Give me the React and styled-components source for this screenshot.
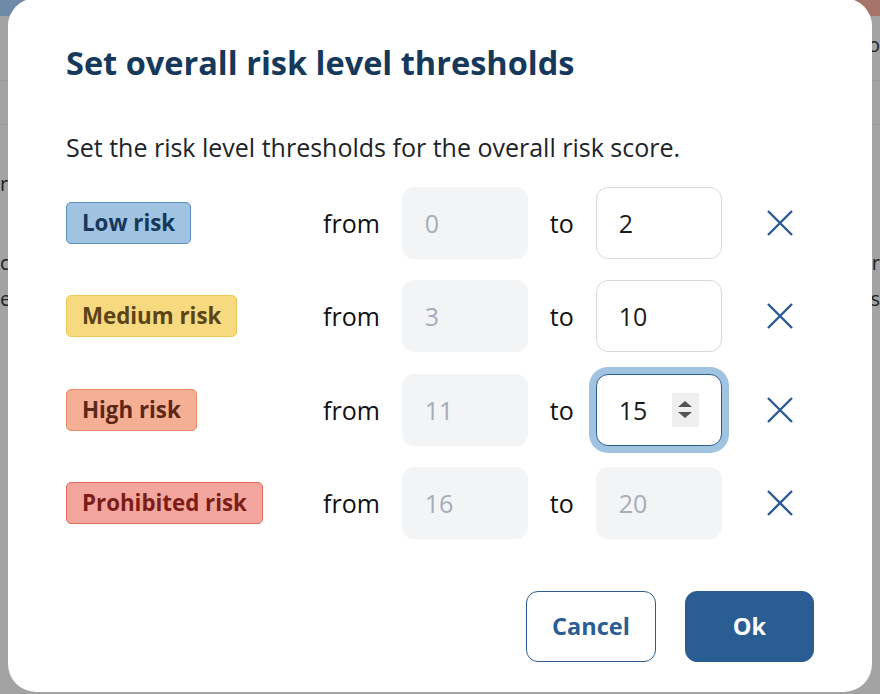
import React from "react";
import styled, { createGlobalStyle } from "styled-components";

const GlobalStyle = createGlobalStyle`
  html, body {
    margin: 0;
    padding: 0;
    overflow: hidden;
  }
  body {
    font-family: "Open Sans", "Noto Sans", sans-serif;
    background: #ffffff;
  }
  * {
    box-sizing: border-box;
  }
`;

// page behind the dialog
const StPage = styled.div`
  width: 880px;
  height: 694px;
  background: #fbfbfb;
  display: flex;
  flex-direction: column;
`;

const StTopBar = styled.div`
  height: 16px;
  display: flex;
  justify-content: space-between;
`;

const StTopBlock = styled.div`
  width: 120px;
  background: ${(props) => props.color};
`;

const StToolbar = styled.div`
  height: 65px;
  border-bottom: 1px solid #ececec;
  display: flex;
  justify-content: space-between;
  align-items: center;
  padding-bottom: 8px;
  font-size: 20px;
  color: #333;
`;

const StSubBar = styled.div`
  height: 44px;
  border-bottom: 1px solid #ececec;
`;

const StPageText = styled.div`
  display: flex;
  justify-content: space-between;
  font-size: 20px;
  color: #333;
  line-height: 36px;
  margin-top: ${(props) => props.top}px;
`;

const StOverlay = styled.div`
  position: fixed;
  inset: 0;
  background: rgba(0, 0, 0, 0.35);
  display: flex;
  flex-direction: column;
  align-items: stretch;
`;

const StModal = styled.div`
  margin: -2px 8px 0;
  background: #ffffff;
  border-radius: 28px;
  padding: 42.5px 58px 30px;
  display: flex;
  flex-direction: column;
`;

const StTitle = styled.h2`
  margin: 0;
  font-size: 32.5px;
  font-weight: 700;
  line-height: 44.3px;
  color: #16395b;
`;

const StDescription = styled.p`
  margin: 45.3px 0 23px;
  font-size: 25px;
  line-height: 34px;
  color: #202328;
`;

const StRows = styled.div`
  display: flex;
  flex-direction: column;
  gap: 21.3px;
`;

const StRow = styled.div`
  display: grid;
  grid-template-columns: 235px auto 126px auto 126px auto;
  justify-content: start;
  column-gap: 22px;
  align-items: center;
  height: 72px;
`;

const StBadgeCell = styled.div`
  display: flex;
`;

const StBadge = styled.span`
  display: inline-block;
  padding: 5px 15px;
  line-height: 30px;
  font-size: 22.3px;
  font-weight: 700;
  border-radius: 5px;
  border: 1px solid ${(props) => props.$border};
  background: ${(props) => props.$bg};
  color: ${(props) => props.$color};
`;

const StLabel = styled.span`
  font-size: 25px;
  color: #111111;
`;

const StInputWrap = styled.div`
  position: relative;
  width: 126px;
  height: 72px;
`;

const StInput = styled.input`
  width: 100%;
  height: 100%;
  border-radius: 12px;
  padding: 0 0 0 22px;
  font-family: "Open Sans", "Noto Sans", sans-serif;
  font-size: 25px;
  outline: none;
  border: 1px solid ${(props) => (props.$locked ? "#f3f4f6" : props.$focused ? "#2a5d92" : "#d6dae0")};
  background: ${(props) => (props.$locked ? "#f3f4f6" : "#ffffff")};
  color: ${(props) => (props.$locked ? "#a4adba" : "#1b1b1b")};
  box-shadow: ${(props) => (props.$focused ? "0 0 0 7px #9fc3e0" : "none")};
`;

const StSpinner = styled.span`
  position: absolute;
  right: 23px;
  top: 19px;
  width: 27px;
  height: 34px;
  background: #efefef;
  display: flex;
  flex-direction: column;
  align-items: center;
  justify-content: center;
  gap: 5px;
`;

const StArrow = styled.span`
  width: 0;
  height: 0;
  border-left: 7px solid transparent;
  border-right: 7px solid transparent;
  ${(props) => (props.$down ? "border-top" : "border-bottom")}: 6px solid #555555;
`;

const StRemove = styled.button`
  margin-left: 23px;
  width: 26px;
  height: 26px;
  padding: 0;
  border: none;
  background: none;
  display: flex;
  cursor: pointer;
`;

const StFooter = styled.div`
  display: flex;
  justify-content: flex-end;
  gap: 29px;
  margin-top: 52px;
`;

const StButton = styled.button`
  width: ${(props) => props.$width}px;
  height: 71px;
  border-radius: 12px;
  font-family: "Open Sans", "Noto Sans", sans-serif;
  font-size: 23.5px;
  font-weight: 700;
  border: 1px solid #2a5d92;
  background: ${(props) => (props.$primary ? "#2a5d92" : "#ffffff")};
  color: ${(props) => (props.$primary ? "#ffffff" : "#2a5d92")};
  cursor: pointer;
`;

const levels = [
  { id: 1, name: "Low risk", from: 0, to: 2, bg: "#9fc3e0", border: "#5b8fc0", color: "#17385a" },
  { id: 2, name: "Medium risk", from: 3, to: 10, bg: "#f7da80", border: "#efc658", color: "#5b4416" },
  { id: 3, name: "High risk", from: 11, to: 15, bg: "#f4af94", border: "#eb8a62", color: "#5c2718", focused: true },
  { id: 4, name: "Prohibited risk", from: 16, to: 20, bg: "#f2a69d", border: "#df6c5e", color: "#7d1d18", last: true },
];

function CloseIcon() {
  return (
    <svg width="26" height="26" viewBox="0 0 26 26" fill="none">
      <path d="M1 1L25 25M25 1L1 25" stroke="#2a5b92" strokeWidth="2.4" />
    </svg>
  );
}

function App() {
  return (
    <>
      <GlobalStyle />
      <StPage>
        <StTopBar>
          <StTopBlock color="#aad5ff" />
          <StTopBlock color="#ffb3a5" />
        </StTopBar>
        <StToolbar>
          <span />
          <span>Do</span>
        </StToolbar>
        <StSubBar />
        <StPageText top={41}>
          <span>risk</span>
          <span />
        </StPageText>
        <StPageText top={43}>
          <span>con</span>
          <span>for</span>
        </StPageText>
        <StPageText top={0}>
          <span>either</span>
          <span>s</span>
        </StPageText>
      </StPage>

      <StOverlay>
        <StModal>
          <StTitle>Set overall risk level thresholds</StTitle>
          <StDescription>
            Set the risk level thresholds for the overall risk score.
          </StDescription>
          <StRows>
            {levels.map((level) => {
              return (
                <StRow key={level.id}>
                  <StBadgeCell>
                    <StBadge $bg={level.bg} $border={level.border} $color={level.color}>
                      {level.name}
                    </StBadge>
                  </StBadgeCell>
                  <StLabel>from</StLabel>
                  <StInputWrap>
                    <StInput $locked readOnly value={level.from} />
                  </StInputWrap>
                  <StLabel>to</StLabel>
                  <StInputWrap>
                    <StInput
                      $locked={level.last}
                      $focused={level.focused}
                      readOnly
                      value={level.to}
                    />
                    {level.focused && (
                      <StSpinner>
                        <StArrow />
                        <StArrow $down />
                      </StSpinner>
                    )}
                  </StInputWrap>
                  <StRemove aria-label="Remove">
                    <CloseIcon />
                  </StRemove>
                </StRow>
              );
            })}
          </StRows>
          <StFooter>
            <StButton $width={130}>Cancel</StButton>
            <StButton $width={129} $primary>
              Ok
            </StButton>
          </StFooter>
        </StModal>
      </StOverlay>
    </>
  );
}

export default App;
